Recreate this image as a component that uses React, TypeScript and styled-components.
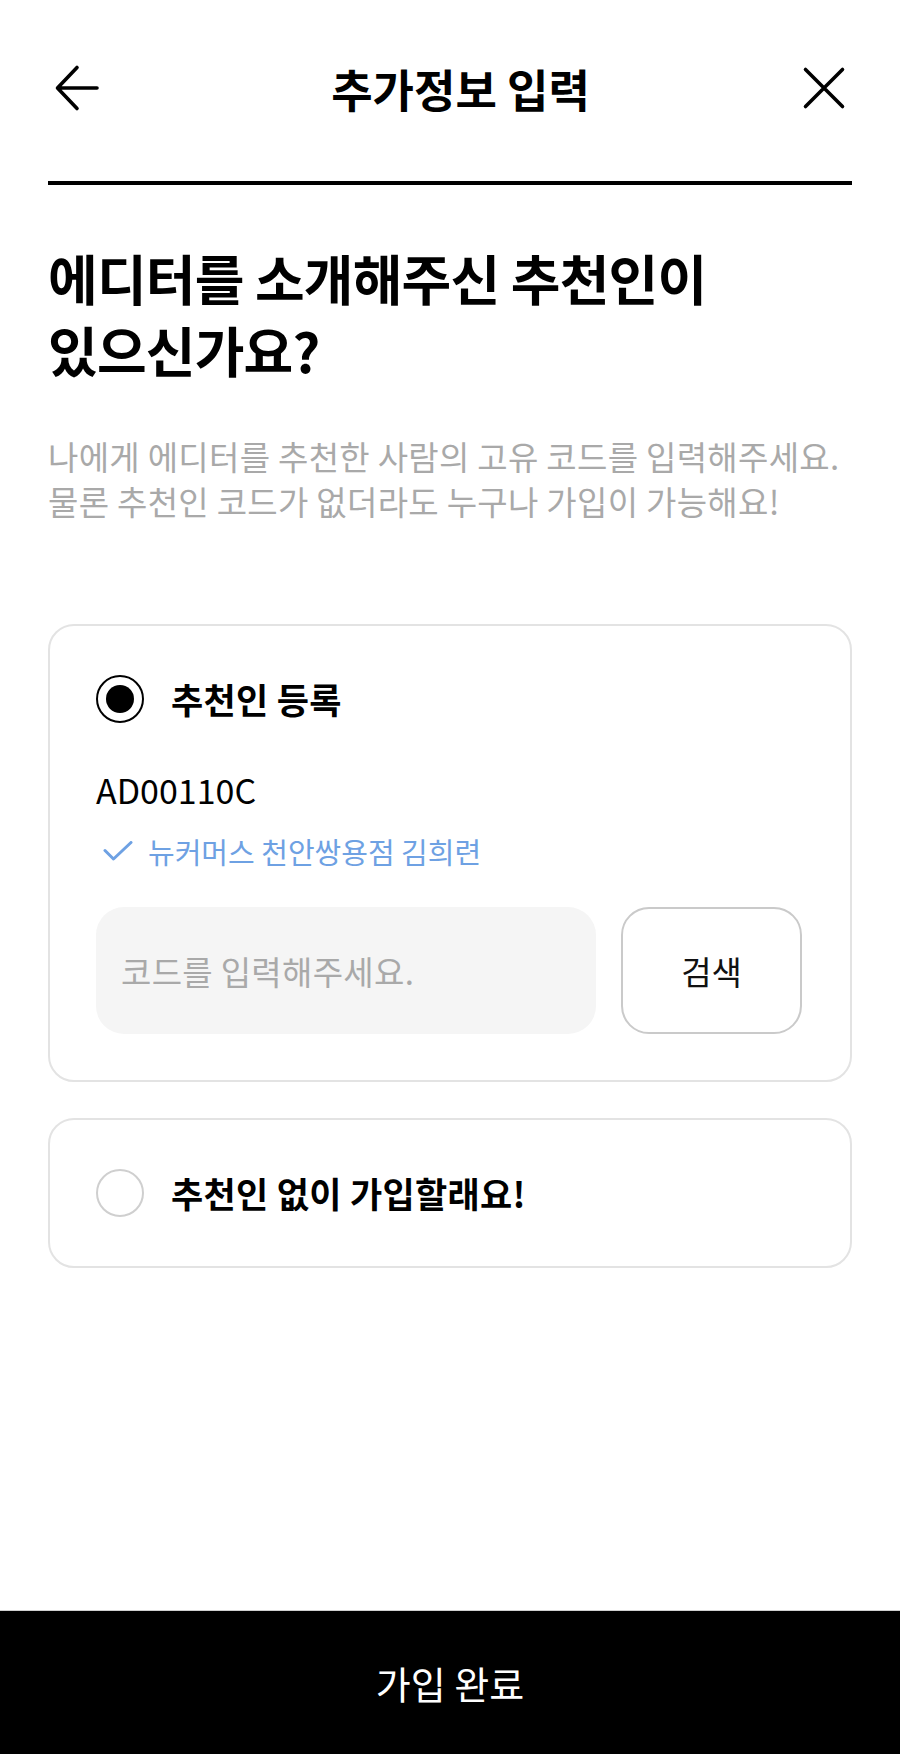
import React, { useState } from "react";
import styled, { createGlobalStyle } from "styled-components";

const GlobalStyle = createGlobalStyle`
  * { box-sizing: border-box; }
  html, body { margin: 0; padding: 0; background: #ffffff; }
  body {
    font-family: "Noto Sans CJK KR", "Noto Sans", sans-serif;
    color: #000;
    -webkit-font-smoothing: antialiased;
  }
`;

const Page = styled.div`
  min-height: 100vh;
  display: flex;
  flex-direction: column;
  background: #fff;
`;

const Header = styled.header`
  height: 181px;
  display: grid;
  grid-template-columns: 48px 1fr 48px;
  align-items: center;
  padding: 0 52px 5px 53px;
`;

const IconButton = styled.button`
  width: 48px;
  height: 48px;
  padding: 0;
  border: 0;
  background: transparent;
  display: flex;
  align-items: center;
  justify-content: center;
  cursor: pointer;
`;

const Title = styled.h1`
  margin: 0 0 0 20px;
  justify-self: center;
  font-size: 45px;
  font-weight: 700;
  letter-spacing: 0;
  line-height: 1;
`;

const Divider = styled.div`
  height: 4px;
  margin: 0 48px;
  background: #000;
`;

const Content = styled.main`
  flex: 1;
  padding: 57px 48px 0;
  display: flex;
  flex-direction: column;
`;

const Heading = styled.h2`
  margin: 0;
  font-size: 54px;
  font-weight: 700;
  line-height: 72px;
  letter-spacing: -0.8px;
`;

const Description = styled.p`
  margin: 48px 0 0;
  font-size: 33px;
  line-height: 45px;
  font-weight: 400;
  color: #a9a9a9;
  letter-spacing: 0.3px;
`;

const Options = styled.div`
  margin-top: 100px;
  display: flex;
  flex-direction: column;
  gap: 36px;
`;

const Card = styled.div<{ $compact?: boolean }>`
  border: 2px solid #e3e3e3;
  border-radius: 26px;
  padding: ${(p) => (p.$compact ? "0 48px 0 46px" : "49px 48px 46px 46px")};
  height: ${(p) => (p.$compact ? "150px" : "auto")};
  display: flex;
  flex-direction: column;
  justify-content: center;
`;

const RadioRow = styled.label`
  display: flex;
  align-items: center;
  gap: 27px;
  cursor: pointer;
`;

const RadioCircle = styled.span<{ $checked: boolean }>`
  width: 48px;
  height: 48px;
  flex: none;
  border-radius: 50%;
  border: ${(p) => (p.$checked ? "2.5px solid #000" : "2.5px solid #cfcfcf")};
  display: flex;
  align-items: center;
  justify-content: center;
  &::after {
    content: "";
    width: 28px;
    height: 28px;
    border-radius: 50%;
    background: ${(p) => (p.$checked ? "#000" : "transparent")};
  }
`;

const RadioLabel = styled.span`
  font-size: 35px;
  font-weight: 700;
  letter-spacing: 0.3px;
  line-height: 48px;
`;

const Code = styled.div`
  margin-top: 47px;
  font-size: 34px;
  line-height: 40px;
  font-weight: 400;
  color: #000;
`;

const Verified = styled.div`
  margin-top: 21px;
  display: flex;
  align-items: center;
  gap: 15px;
  padding-left: 7px;
  font-size: 29px;
  line-height: 40px;
  color: #6ea1e3;
`;

const SearchRow = styled.div`
  margin-top: 36px;
  display: flex;
  gap: 25px;
  height: 127px;
`;

const CodeInput = styled.input`
  flex: 1;
  min-width: 0;
  height: 100%;
  border: 0;
  outline: none;
  border-radius: 28px;
  background: #f5f5f5;
  padding: 0 25px;
  font-family: inherit;
  font-size: 33px;
  color: #000;
  letter-spacing: 0.3px;
  &::placeholder {
    color: #a9a9a9;
  }
`;

const SearchButton = styled.button`
  width: 181px;
  height: 100%;
  flex: none;
  border: 2px solid #cacaca;
  border-radius: 28px;
  background: #fff;
  font-family: inherit;
  font-size: 33px;
  color: #111;
  cursor: pointer;
`;

const Footer = styled.button`
  height: 144px;
  width: 100%;
  border: 0;
  border-top: 1px solid #cfcfcf;
  background: #000;
  color: #fff;
  font-family: inherit;
  font-size: 38px;
  font-weight: 400;
  cursor: pointer;
`;

const BackIcon = () => (
  <svg width="48" height="48" viewBox="0 0 48 48" fill="none">
    <path
      d="M5 24H44M24 3.5L4.5 24L24 44.5"
      stroke="#000"
      strokeWidth="3.6"
      strokeLinecap="round"
      strokeLinejoin="round"
    />
  </svg>
);

const CloseIcon = () => (
  <svg width="48" height="48" viewBox="0 0 48 48" fill="none">
    <path
      d="M5.5 5.5L42.5 42.5M42.5 5.5L5.5 42.5"
      stroke="#000"
      strokeWidth="3.6"
      strokeLinecap="round"
    />
  </svg>
);

const CheckIcon = () => (
  <svg width="30" height="20" viewBox="0 0 30 20" fill="none">
    <path
      d="M2 9.5L10.5 18L28 1.5"
      stroke="#6ea1e3"
      strokeWidth="3"
      strokeLinecap="round"
      strokeLinejoin="round"
    />
  </svg>
);

export default function App() {
  const [choice, setChoice] = useState<"code" | "none">("code");
  return (
    <>
      <GlobalStyle />
      <Page>
        <Header>
          <IconButton aria-label="뒤로">
            <BackIcon />
          </IconButton>
          <Title>추가정보 입력</Title>
          <IconButton aria-label="닫기">
            <CloseIcon />
          </IconButton>
        </Header>
        <Divider />
        <Content>
          <Heading>
            에디터를 소개해주신 추천인이
            <br />
            있으신가요?
          </Heading>
          <Description>
            나에게 에디터를 추천한 사람의 고유 코드를 입력해주세요.
            <br />
            물론 추천인 코드가 없더라도 누구나 가입이 가능해요!
          </Description>
          <Options>
            <Card>
              <RadioRow onClick={() => setChoice("code")}>
                <RadioCircle $checked={choice === "code"} />
                <RadioLabel>추천인 등록</RadioLabel>
              </RadioRow>
              <Code>AD00110C</Code>
              <Verified>
                <CheckIcon />
                <span>뉴커머스 천안쌍용점 김희련</span>
              </Verified>
              <SearchRow>
                <CodeInput placeholder="코드를 입력해주세요." />
                <SearchButton>검색</SearchButton>
              </SearchRow>
            </Card>
            <Card $compact>
              <RadioRow onClick={() => setChoice("none")}>
                <RadioCircle $checked={choice === "none"} />
                <RadioLabel>추천인 없이 가입할래요!</RadioLabel>
              </RadioRow>
            </Card>
          </Options>
        </Content>
        <Footer>가입 완료</Footer>
      </Page>
    </>
  );
}
